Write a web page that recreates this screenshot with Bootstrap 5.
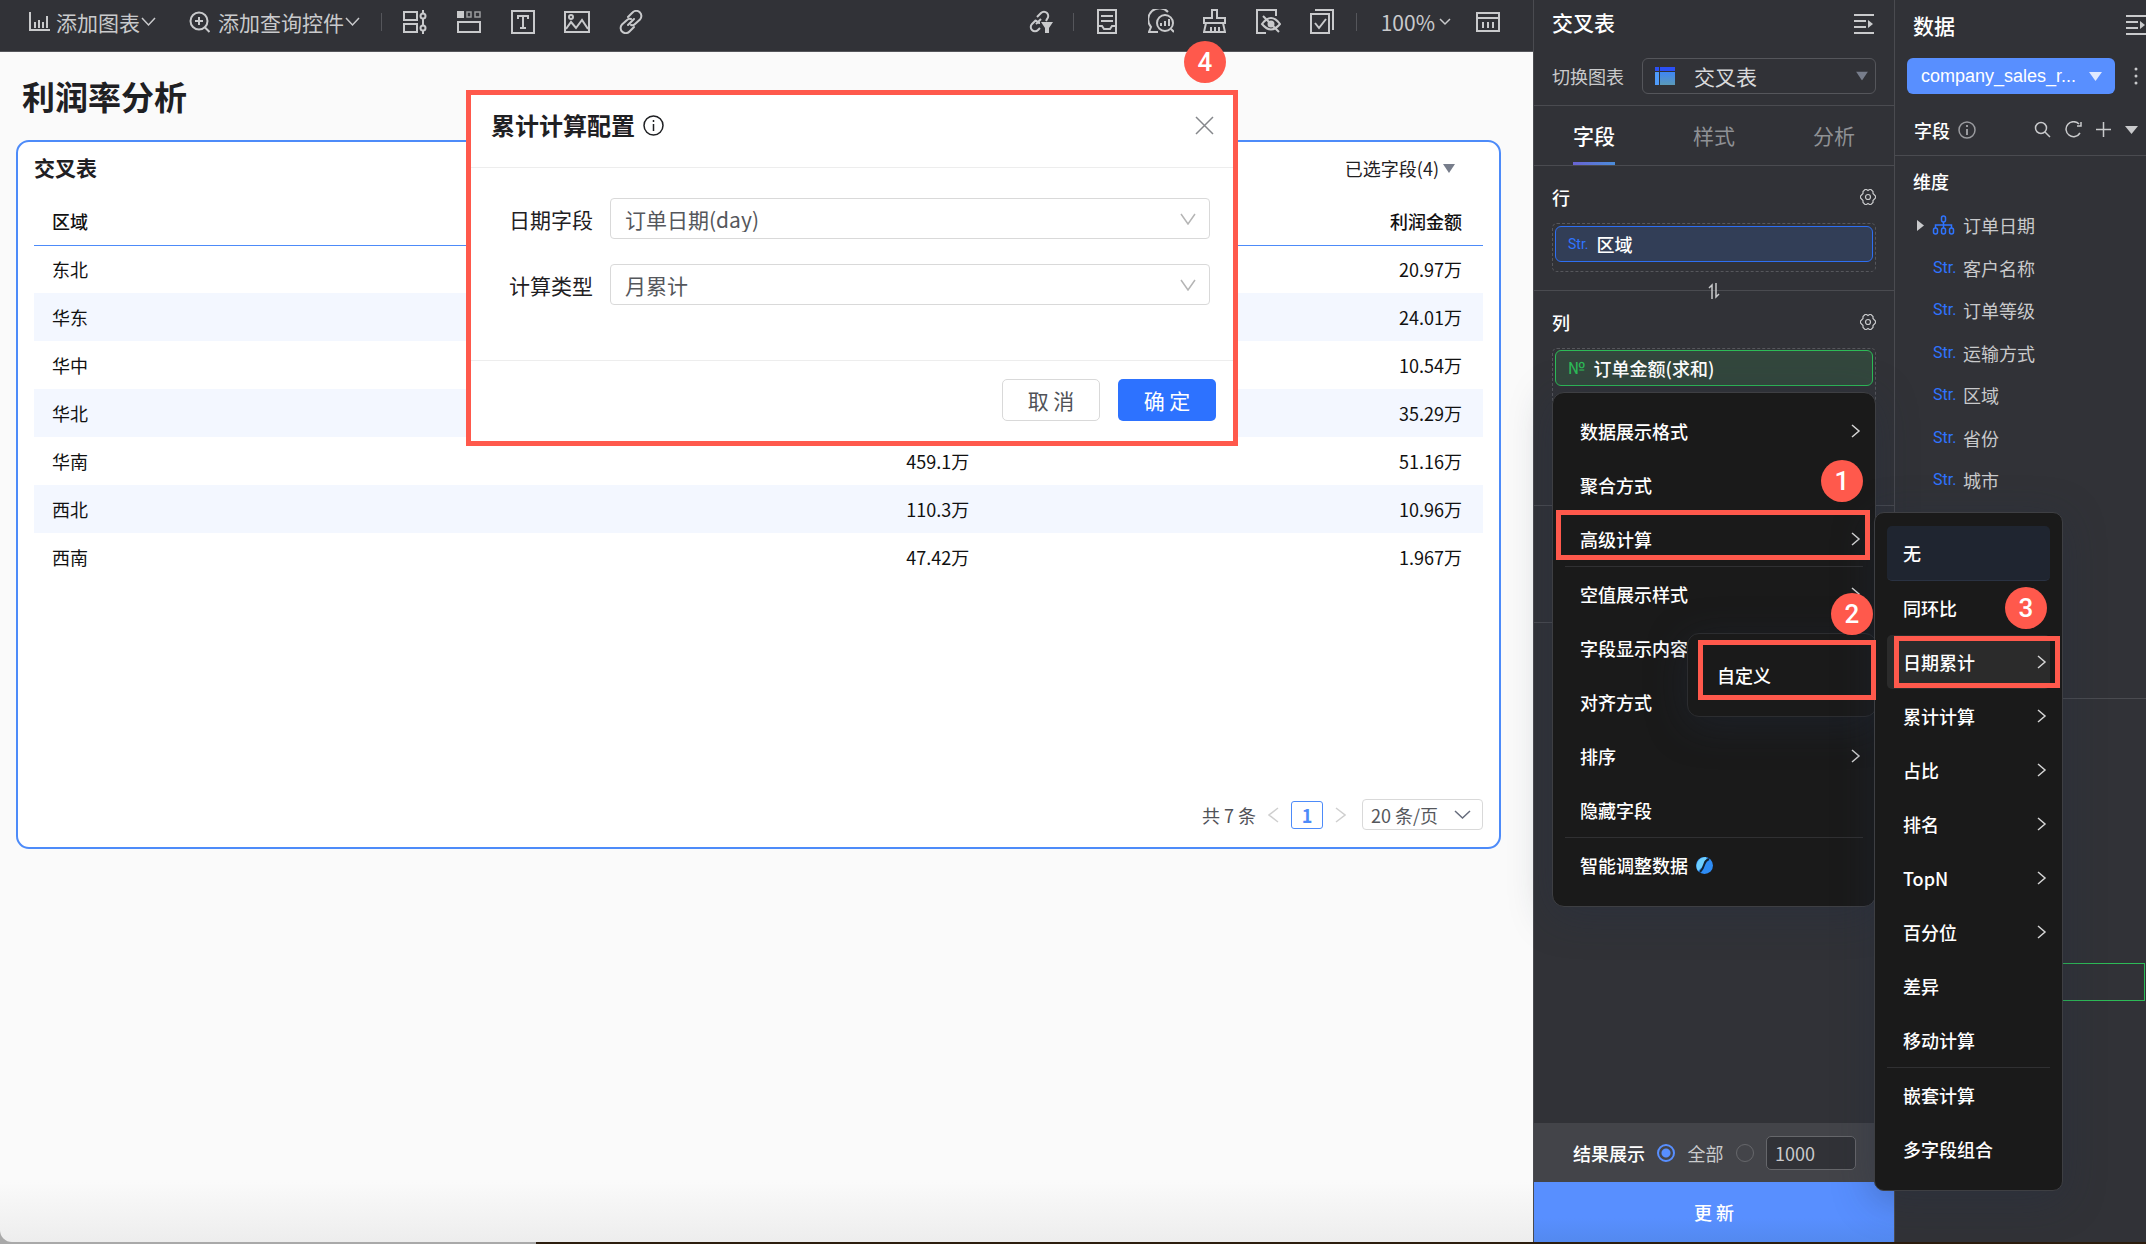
<!DOCTYPE html>
<html lang="zh-CN">
<head>
<meta charset="utf-8">
<meta name="viewport" content="width=device-width, initial-scale=1">
<title>利润率分析</title>
<link href="https://cdn.jsdelivr.net/npm/bootstrap@5.3.0/dist/css/bootstrap.min.css" rel="stylesheet">
<style>
:root{--panel:#313237;--line:#4a4b50;--soft:#c9cacc;--accent:#4d8bf9;--hot:#ff594c}
body{font-family:"Noto Sans CJK SC",sans-serif;font-size:18px;line-height:26px;color:#1f2023}
button{font-family:inherit}
svg{display:block;flex:none}
.ico{fill:none;stroke:currentColor;stroke-width:2}
.plain{background:none;border:0;padding:0;color:inherit;display:inline-flex;align-items:center;line-height:inherit;font-size:inherit}
.fs21{font-size:21px;line-height:30px}
.shell{height:100vh;padding-bottom:2px;background:linear-gradient(90deg,#a9a9a9 25%,#2c1d0e 25%)}
.workspace{background:linear-gradient(#fafafa calc(100% - 60px),#ededed);border-bottom-left-radius:12px;min-width:0}
.toolbar{height:52px;padding:0 32px 8px 28px;background:var(--panel);border-bottom:1px solid #55565b;color:var(--soft)}
.toolgroup{gap:28px}
.toolgroup .plain{width:26px;justify-content:center}
.vr-line{width:1px;height:18px;background:#55565b;margin:0 20px}
.page-title{font-size:33px;line-height:44px;font-weight:700;margin:22px 0 0 22px;padding-bottom:22px}
.chart{margin:0 32px 0 16px;min-height:709px;border:2px solid var(--accent);border-radius:13px;background:#fff;padding:0 16px 17px 16px}
.chart-head{height:52px;margin-bottom:6px}
.chart-head h2{font-size:21px;font-weight:700}
.grid-table{width:100%;table-layout:fixed;border-collapse:collapse;color:#111}
.grid-table th{height:45px;font-weight:500;padding-bottom:2px!important;border-bottom:1px solid var(--accent)}
.grid-table td{height:48px}
.grid-table th,.grid-table td{padding:0 21px 0 18px;text-align:right}
.grid-table th:first-child,.grid-table td:first-child{text-align:left}
.grid-table tbody tr:nth-child(even){background:#f3f7ff}
.pager{gap:12px;color:#505258}
.page-now{width:32px;height:28px;border:1px solid var(--accent);border-radius:3px;color:var(--accent);justify-content:center;font-weight:700}
.pick{position:relative}
.pick select{appearance:none;width:100%;height:100%;background:transparent;border:1px solid #d9d9d9;border-radius:4px;color:#55575c;padding:0 10px;font:inherit}
.pick svg{position:absolute;right:14px;top:50%;translate:0 -50%;pointer-events:none}
.pager .pick{width:121px;height:31px;margin-left:4px}
.pager .pick select{padding:0 8px}
.pager .pick svg{right:12px}
.dialog-box{position:absolute;left:466px;top:90px;width:772px;border:5px solid var(--hot);background:#fff;z-index:3}
.dialog-top{height:73px;padding:0 19px 12px 20px;border-bottom:1px solid #ededed}
.dialog-top h3{font-size:24px;font-weight:700;margin:0 8px 0 0}
.dialog-mid{padding:30px 23px 55px 38px;gap:25px}
.dialog-mid label{width:84px;margin-right:17px;font-size:21px}
.dialog-mid .pick{height:41px;font-size:21px}
.dialog-mid .pick select{padding:0 14px}
.dialog-end{padding:18px 17px 20px;gap:18px;border-top:1px solid #ededed}
.dlg-btn{width:98px;height:42px;padding:0;font-size:21px;line-height:30px;border-radius:5px}
.dlg-no{border:1px solid #d9d9d9;color:#505258;background:#fff}
.dlg-ok,.dlg-ok:hover{background:#2d72ff;color:#fff;border:0}
.pin{position:absolute;width:42px;height:42px;border-radius:50%;background:var(--hot);color:#fff;font:500 26px/42px Roboto,sans-serif;text-align:center;z-index:9}
.pin-4{left:1184px;top:41px}.pin-1{left:287px;top:460px}.pin-2{left:297px;top:593px}.pin-3{left:471px;top:587px}
.settings{width:361px;background:var(--panel);border-left:1px solid var(--line);color:#fff;flex:none}
.fields{width:252px;background:var(--panel);border-left:1px solid var(--line);color:#fff;flex:none}
.set-head{height:46px;padding:0 20px 2px 18px}
.set-type{height:60px;padding:0 18px 0;color:var(--soft);border-bottom:1px solid var(--line)}
.set-type .pick{width:234px;height:36px;font-size:21px}
.set-type .pick select{border-color:#55565b;border-radius:6px;color:#d8d9db;padding-left:51px}
.set-type .pick svg{right:8px;color:#777d8b}
.set-type .pick .type-mark{left:13px;right:auto}
.set-tabs{height:60px;padding:0 39px;border-bottom:1px solid var(--line);font-size:21px}
.set-tabs .plain{color:#8f9195;border-bottom:3px solid transparent;padding-top:2px}
.set-tabs .plain.active{color:#fff;font-weight:500;border-image:linear-gradient(90deg,#6a62d2,#4a8edb) 1}
.zone{padding:13px 18px 18px;border-bottom:1px solid var(--line)}
.zone h4{font-size:18px;line-height:36px;margin:0;font-weight:500}
.zone-rest{height:117px}
.drop{border:1px dashed #56575c;border-radius:5px;margin-top:8px;height:49px;padding:2px}
.drop-tall{height:139px;padding-top:1px}
.pill{height:36px;width:100%;border:1px solid #2e6ff2;border-radius:6px;background:#323e57;color:#fff;padding:0 12px;gap:8px;font-weight:500}
.pill-num{border-color:#2dbb57;background:#33473d}
.tag{font:16px/24px Roboto,sans-serif;color:#2f74ff}
.pill .tag{font-size:14px}
.pill .tag-num{font-size:17px;color:#2dbb57}
.swap{position:absolute;left:174px;top:283px}
.result{height:59px;background:#434449;padding:0 30px 0 39px;white-space:nowrap}
.result input[type=radio]{appearance:none;width:18px;height:18px;border:1px solid #66676b;border-radius:50%;margin:0;background:none;flex:none}
.result input[type=radio]:checked{border:2px solid #588fff;background:radial-gradient(#588fff 4px,transparent 5px)}
.result input[type=text]{width:90px;height:34px;border:1px solid #66676b;border-radius:5px;background:#313237;color:var(--soft);padding:0 8px}
.refresh{height:60px;background:linear-gradient(#588fff 60%,#5389ef);color:#fff;border:0}
.flyout{position:absolute;background:#1a1a1a;border:1px solid #3e3f43;border-radius:12px;color:#fff;z-index:4;box-shadow:0 8px 40px rgba(35,45,70,.35)}
.flyout .plain{width:100%;height:54px;justify-content:space-between;font-weight:500;text-align:left}
.flyout svg.ico{color:#d5d5d5;stroke-width:1.5}
.split{border-top:1px solid #303032}
.fly-main{left:18px;top:392px;width:324px;padding:11px 12px 14px}
.fly-main .plain{padding:0 2px 0 15px}
.fly-calc{left:340px;top:512px;width:189px;padding:13px 12px 14px;border-radius:10px;z-index:5}
.fly-calc .plain{padding:0 3px 0 16px}
.fly-calc .chosen{background:#1f2530;border-bottom:1px solid #2a3242;border-radius:5px;height:55px}
.fly-calc .hovered{background:#2b2b2b;border-radius:5px}
.fly-own{left:153px;top:633px;width:190px;padding:14px 12px;border-color:#2c2d30;z-index:4}
.fly-own .plain{padding:0 17px}
.ring{position:absolute;border:5px solid var(--hot);z-index:6;pointer-events:none}
.ring-a{left:22px;top:510px;width:314px;height:50px}
.ring-b{left:164px;top:640px;width:178px;height:60px}
.ring-c{left:360px;top:636px;width:166px;height:52px}
.data-head{height:58px;padding:0 0 8px 18px}
.dataset{width:208px;height:36px;background:#588fff;border-radius:6px;color:#fff;padding:0 12px 0 13px;font:18px/26px "Liberation Sans",sans-serif;justify-content:space-between}
.dataset:hover{background:#588fff;color:#fff}
.data-tools{height:62px;padding:10px 8px 0 19px;margin-bottom:12px;border-bottom:1px solid var(--line);color:var(--soft)}
.tool-set{gap:14px}
.data-list h4{font-size:18px;line-height:26px;font-weight:500;margin:0 0 10px 18px}
.data-list ul{height:297px}
.data-list li{height:42px;padding-left:38px;color:var(--soft)}
.data-list .tree-row{padding-left:22px}
.data-list .tag{width:30px}
.measure{position:absolute;left:20px;right:1px;top:963px;height:38px;border:1px solid #2dbb57}
.rule{position:absolute;left:0;right:0;top:698px;border-top:1px solid var(--line)}
</style>
<script src="https://cdn.jsdelivr.net/npm/bootstrap@5.3.0/dist/js/bootstrap.bundle.min.js"></script>
</head>
<body>
<div class="shell d-flex overflow-hidden position-relative">

<main class="workspace flex-fill position-relative">
  <header class="toolbar d-flex align-items-center justify-content-between">
    <div class="d-flex align-items-center">
      <button class="plain fs21"><svg class="ico me-1" width="24" height="20" viewBox="0 0 24 20"><path d="M2 0v18h20M7 16v-6M11 16V8M15 16v-6M19 16V4"/></svg>添加图表<svg class="ico" width="17" height="10" viewBox="0 0 17 10"><path d="M2 1l6.500 7 6.500-7" stroke-width="1.500"/></svg></button>
      <button class="plain fs21 ms-4 ps-2"><svg class="ico me-2" width="21" height="22" viewBox="0 0 21 22"><circle cx="10" cy="10" r="8.500"/><path d="M10 6v8M6 10h8M15.500 16l5 5"/></svg>添加查询控件<svg class="ico" width="17" height="10" viewBox="0 0 17 10"><path d="M2 1l6.500 7 6.500-7" stroke-width="1.500"/></svg></button>
      <span class="vr-line"></span>
      <div class="toolgroup d-flex">
        <button class="plain" aria-label="筛选器"><svg class="ico" width="24" height="24" viewBox="0 0 24 24"><path d="M1 2h13v8H1zM1 14h13v8H1zM20 0v4M20 8v8M20 20v4"/><circle cx="20" cy="6" r="2.500"/><circle cx="20" cy="18" r="2.500"/></svg></button>
        <button class="plain" aria-label="标签页"><svg class="ico" width="24" height="24" viewBox="0 0 24 24"><path d="M0 1h7v7H0z" fill="currentColor" stroke="none"/><path d="M10 2h4v5h-4zM18 2h5v5h-5z" stroke-width="1.500" opacity=".7"/><path d="M1 12h22v10H1z"/></svg></button>
        <button class="plain" aria-label="文本"><svg class="ico" width="24" height="24" viewBox="0 0 24 24"><path d="M1 1h22v22H1zM7 9V6h10v3M12 6v12M9 18h6"/></svg></button>
        <button class="plain" aria-label="图片"><svg class="ico" width="26" height="22" viewBox="0 0 26 22"><path d="M1 1h24v20H1z"/><circle cx="7" cy="6" r="2"/><path d="M2 18l5-7 5 6 6-8 6 9"/></svg></button>
        <button class="plain" aria-label="链接"><svg class="ico" width="24" height="24" viewBox="0 0 24 24"><path d="M9 7l4.500-4.500a5 5 0 017.500 7L16 14a4 4 0 01-4 1M15 17l-4.500 4.500a5 5 0 01-7.500-7L8 10a4 4 0 014-1M9 15l6-6" stroke-linecap="round"/></svg></button>
      </div>
    </div>
    <div class="d-flex align-items-center">
      <button class="plain" aria-label="联动"><svg class="ico" width="24" height="24" viewBox="0 0 24 24"><path d="M8 7l4-4a4 4 0 016 6l-1 2M11 13a4 4 0 01-4-3M11 18l-2 2a4 4 0 01-6-6l4-4M7 14l5-5"/><path d="M12 12h12l-4 6v5h-4v-5z" fill="currentColor" stroke="none"/></svg></button>
      <span class="vr-line"></span>
      <div class="toolgroup d-flex">
        <button class="plain" aria-label="收件"><svg class="ico" width="20" height="25" viewBox="0 0 20 25"><path d="M1 1h18v23H1zM4 7h12M4 12h12M1 17h4l2 3h6l2-3h4"/></svg></button>
        <button class="plain" aria-label="智能分析"><svg class="ico" width="26" height="25" viewBox="0 0 26 25"><path d="M20 3A11 11 0 003 18l-2 5h9"/><circle cx="17" cy="14" r="8"/><path d="M13 17v-3M17 17v-5M21 17v-7M23 20l3 3"/></svg></button>
        <button class="plain" aria-label="清理"><svg class="ico" width="23" height="25" viewBox="0 0 23 25"><path d="M9 9V1h5v8h8v5H1V9zM3 14L1 23h21l-2-9M8 23v-5M12 23v-5M16 23v-5"/></svg></button>
        <button class="plain" aria-label="隐藏"><svg class="ico" width="25" height="25" viewBox="0 0 25 25"><path d="M10 24H1V1h19v6M6 15q9-12 18 0-9 11-18 0zM7 7l16 16"/><circle cx="15" cy="15" r="2.500" fill="currentColor"/></svg></button>
        <button class="plain" aria-label="多选"><svg class="ico" width="25" height="25" viewBox="0 0 25 25"><path d="M1 5h18v19H1zM5 1h18v20M5 14l4 5 7-9"/></svg></button>
      </div>
      <span class="vr-line me-4"></span>
      <button class="plain fs21 me-4">100%<svg class="ico ms-1" width="12" height="8" viewBox="0 0 12 8"><path d="M1 1l5 5 5-5" stroke-width="1.500"/></svg></button>
      <button class="plain" aria-label="表格"><svg class="ico" width="26" height="22" viewBox="0 0 26 22"><path d="M2 2h22v18H2zM2 7h22M8 11v6M13 11v6M18 11v6"/></svg></button>
    </div>
  </header>

  <h1 class="page-title mb-0">利润率分析</h1>

  <section class="chart d-flex flex-column">
    <div class="chart-head d-flex align-items-center justify-content-between">
      <h2 class="m-0">交叉表</h2>
      <button class="plain me-4">已选字段(4)<svg class="ms-1 me-1" width="12" height="9" viewBox="0 0 12 9"><path d="M0 0h12L6 9z" fill="#777d8b"/></svg></button>
    </div>
    <table class="grid-table">
      <colgroup><col style="width:33%"><col style="width:33%"><col style="width:34%"></colgroup>
      <thead><tr><th>区域</th><th></th><th>利润金额</th></tr></thead>
      <tbody>
        <tr><td>东北</td><td></td><td>20.97万</td></tr>
        <tr><td>华东</td><td></td><td>24.01万</td></tr>
        <tr><td>华中</td><td></td><td>10.54万</td></tr>
        <tr><td>华北</td><td></td><td>35.29万</td></tr>
        <tr><td>华南</td><td>459.1万</td><td>51.16万</td></tr>
        <tr><td>西北</td><td>110.3万</td><td>10.96万</td></tr>
        <tr><td>西南</td><td>47.42万</td><td>1.967万</td></tr>
      </tbody>
    </table>
    <div class="pager d-flex align-items-center justify-content-end mt-auto">
      <span>共 7 条</span>
      <button class="plain" aria-label="上一页"><svg class="ico" width="11" height="16" viewBox="0 0 11 16"><path d="M10 1L1 8l9 7" stroke="#cfcfcf" stroke-width="1.500"/></svg></button>
      <button class="plain page-now">1</button>
      <button class="plain" aria-label="下一页"><svg class="ico" width="11" height="16" viewBox="0 0 11 16"><path d="M1 1l9 7-9 7" stroke="#cfcfcf" stroke-width="1.500"/></svg></button>
      <div class="pick"><select aria-label="每页条数"><option>20 条/页</option></select><svg class="ico" width="17" height="10" viewBox="0 0 17 10"><path d="M1 1l7.500 7L16 1" stroke="#666c7c" stroke-width="1.500"/></svg></div>
    </div>
  </section>

  <section class="dialog-box" role="dialog" aria-label="累计计算配置">
    <div class="dialog-top d-flex align-items-center">
      <h3>累计计算配置</h3>
      <svg class="ico" width="21" height="21" viewBox="0 0 21 21"><circle cx="10.500" cy="10.500" r="9.500" stroke-width="1.500"/><path d="M10.500 9v7M10.500 5v2" stroke-width="1.500"/></svg>
      <button class="plain ms-auto" aria-label="关闭"><svg class="ico" width="19" height="19" viewBox="0 0 19 19"><path d="M1 1l17 17M18 1L1 18" stroke="#85878b" stroke-width="1.500"/></svg></button>
    </div>
    <div class="dialog-mid d-flex flex-column">
      <div class="d-flex align-items-center"><label for="dateField">日期字段</label><div class="pick flex-fill"><select id="dateField"><option>订单日期(day)</option></select><svg class="ico" width="16" height="12" viewBox="0 0 16 12"><path d="M1 1l7 10 7-10" stroke="#b5b5b5" stroke-width="1.500"/></svg></div></div>
      <div class="d-flex align-items-center"><label for="calcType">计算类型</label><div class="pick flex-fill"><select id="calcType"><option>月累计</option></select><svg class="ico" width="16" height="12" viewBox="0 0 16 12"><path d="M1 1l7 10 7-10" stroke="#b5b5b5" stroke-width="1.500"/></svg></div></div>
    </div>
    <div class="dialog-end d-flex justify-content-end">
      <button class="btn dlg-btn dlg-no">取 消</button>
      <button class="btn dlg-btn dlg-ok">确 定</button>
    </div>
  </section>
  <span class="pin pin-4">4</span>
</main>

<aside class="settings d-flex flex-column position-relative">
  <div class="set-head d-flex align-items-center justify-content-between">
    <span class="fs21 fw-medium">交叉表</span>
    <svg class="ico mt-1" width="20" height="20" viewBox="0 0 20 20" color="#c9cacc"><path d="M0 1h20M0 7h12M0 13h12M0 19h20"/><path d="M14 6l5 4-5 4z" fill="currentColor" stroke="none"/></svg>
  </div>
  <div class="set-type d-flex align-items-center justify-content-between">
    <label for="chartType">切换图表</label>
    <div class="pick"><select id="chartType"><option>交叉表</option></select>
      <svg class="type-mark" width="20" height="18" viewBox="0 0 20 18"><defs><linearGradient id="tm" x2="0" y2="1"><stop stop-color="#3f86f5"/><stop offset="1" stop-color="#5b9ab8"/></linearGradient></defs><path d="M0 0h4v4H0zM5 0h15v4H5z" fill="#2b50f6"/><path d="M0 5h4v13H0z" fill="#4f9bfa"/><path d="M5 5h15v13H5z" fill="url(#tm)"/></svg>
      <svg width="12" height="9" viewBox="0 0 12 9"><path d="M0 0h12L6 9z" fill="currentColor"/></svg></div>
  </div>
  <nav class="set-tabs d-flex justify-content-between">
    <button class="plain active">字段</button><button class="plain">样式</button><button class="plain">分析</button>
  </nav>
  <section class="zone">
    <div class="d-flex align-items-center justify-content-between"><h4>行</h4><svg class="ico" width="16" height="18" viewBox="0 0 16 18" color="#c9cacc"><path d="M5 1.500h1.500l1.500 1 1.500-1H11l2 2v2l2.500 2.500v2L13 12.500v2l-2 2H9.500l-1.500-1-1.500 1H5l-2-2v-2L.5 10V8L3 5.500v-2z" stroke-width="1.200"/><circle cx="8" cy="9" r="2.500" stroke-width="1.200"/></svg></div>
    <div class="drop"><button class="plain pill"><span class="tag">Str.</span>区域</button></div>
  </section>
  <svg class="ico swap" width="12" height="16" viewBox="0 0 12 16" color="#c9cacc"><path d="M4 16V2L1 5M8 0v14l3-3" stroke-width="1.500"/></svg>
  <section class="zone">
    <div class="d-flex align-items-center justify-content-between"><h4>列</h4><svg class="ico" width="16" height="18" viewBox="0 0 16 18" color="#c9cacc"><path d="M5 1.500h1.500l1.500 1 1.500-1H11l2 2v2l2.500 2.500v2L13 12.500v2l-2 2H9.500l-1.500-1-1.500 1H5l-2-2v-2L.5 10V8L3 5.500v-2z" stroke-width="1.200"/><circle cx="8" cy="9" r="2.500" stroke-width="1.200"/></svg></div>
    <div class="drop drop-tall"><button class="plain pill pill-num"><span class="tag tag-num">№</span>订单金额(求和)</button></div>
  </section>
  <section class="zone zone-rest"></section>
  <div class="flex-fill"></div>
  <div class="result d-flex align-items-center justify-content-between">
    <span class="fw-medium">结果展示</span>
    <input type="radio" name="rows" id="allRows" checked><label for="allRows" style="color:#c9cacc">全部</label>
    <input type="radio" name="rows" id="someRows" aria-label="指定条数">
    <input class="me-2" type="text" value="1000" aria-label="条数">
  </div>
  <button class="refresh fw-medium">更 新</button>

  <div class="flyout fly-main">
    <button class="plain">数据展示格式<svg class="ico" width="10" height="14" viewBox="0 0 10 14"><path d="M1 1l7 6-7 6"/></svg></button>
    <button class="plain">聚合方式</button>
    <button class="plain">高级计算<svg class="ico" width="10" height="14" viewBox="0 0 10 14"><path d="M1 1l7 6-7 6"/></svg></button>
    <div class="split"></div>
    <button class="plain">空值展示样式<svg class="ico" width="10" height="14" viewBox="0 0 10 14"><path d="M1 1l7 6-7 6"/></svg></button>
    <button class="plain">字段显示内容</button>
    <button class="plain">对齐方式</button>
    <button class="plain">排序<svg class="ico" width="10" height="14" viewBox="0 0 10 14"><path d="M1 1l7 6-7 6"/></svg></button>
    <button class="plain">隐藏字段</button>
    <div class="split"></div>
    <button class="plain justify-content-start">智能调整数据<svg class="ms-2" width="17" height="17" viewBox="0 0 17 17"><circle cx="8.500" cy="8.500" r="8.500" fill="#2e8cf5"/><path d="M2 14C-2 7 3 0 10 0l1 3c-5 2-1 5-6 8z" fill="#6fd0ff"/><path d="M13 2C6 5 11 7 4 15" fill="none" stroke="#123" stroke-width="2"/></svg></button>
  </div>
  <div class="flyout fly-own"><button class="plain">自定义</button></div>
  <div class="flyout fly-calc">
    <button class="plain chosen">无</button>
    <button class="plain">同环比</button>
    <button class="plain hovered">日期累计<svg class="ico" width="10" height="14" viewBox="0 0 10 14"><path d="M1 1l7 6-7 6"/></svg></button>
    <button class="plain">累计计算<svg class="ico" width="10" height="14" viewBox="0 0 10 14"><path d="M1 1l7 6-7 6"/></svg></button>
    <button class="plain">占比<svg class="ico" width="10" height="14" viewBox="0 0 10 14"><path d="M1 1l7 6-7 6"/></svg></button>
    <button class="plain">排名<svg class="ico" width="10" height="14" viewBox="0 0 10 14"><path d="M1 1l7 6-7 6"/></svg></button>
    <button class="plain">TopN<svg class="ico" width="10" height="14" viewBox="0 0 10 14"><path d="M1 1l7 6-7 6"/></svg></button>
    <button class="plain">百分位<svg class="ico" width="10" height="14" viewBox="0 0 10 14"><path d="M1 1l7 6-7 6"/></svg></button>
    <button class="plain">差异</button>
    <button class="plain">移动计算</button>
    <div class="split"></div>
    <button class="plain">嵌套计算</button>
    <button class="plain">多字段组合</button>
  </div>
  <span class="ring ring-a"></span><span class="ring ring-b"></span><span class="ring ring-c"></span>
  <span class="pin pin-1">1</span><span class="pin pin-2">2</span><span class="pin pin-3">3</span>
</aside>

<aside class="fields position-relative z-0">
  <div class="data-head d-flex align-items-center justify-content-between">
    <span class="fs21 fw-medium">数据</span>
    <svg class="ico" width="20" height="20" viewBox="0 0 20 20" color="#c9cacc"><path d="M0 1h20M0 7h12M0 13h12M0 19h20"/><path d="M14 6l5 4-5 4z" fill="currentColor" stroke="none"/></svg>
  </div>
  <div class="d-flex align-items-center justify-content-between px-2 ms-1">
    <button class="btn dataset d-flex align-items-center">company_sales_r...<svg width="13" height="9" viewBox="0 0 13 9"><path d="M0 0h13L6.500 9z" fill="#dfe9ff"/></svg></button>
    <svg width="4" height="18" viewBox="0 0 4 18" fill="#c9cacc"><circle cx="2" cy="2" r="1.500"/><circle cx="2" cy="9" r="1.500"/><circle cx="2" cy="16" r="1.500"/></svg>
  </div>
  <div class="data-tools d-flex align-items-center justify-content-between">
    <div class="d-flex align-items-center"><span class="text-white fw-medium me-2">字段</span>
    <svg class="ico" width="18" height="18" viewBox="0 0 18 18" color="#9a9b9f"><circle cx="9" cy="9" r="8" stroke-width="1.500"/><path d="M9 8v6M9 4v2"/></svg></div>
    <div class="tool-set d-flex align-items-center">
    <svg class="ico" width="17" height="17" viewBox="0 0 17 17"><circle cx="7" cy="7" r="5.500" stroke-width="1.500"/><path d="M11 11l5 5" stroke-width="1.500"/></svg>
    <svg class="ico" width="17" height="17" viewBox="0 0 17 17"><path d="M14 3a7.500 7.500 0 101 9M16 1v4h-4" stroke-width="1.500"/></svg>
    <svg class="ico" width="15" height="15" viewBox="0 0 15 15"><path d="M7.500 0v15M0 7.500h15" stroke-width="1.500"/></svg>
    <svg width="13" height="8" viewBox="0 0 13 8"><path d="M0 0h13L6.500 8z" fill="currentColor"/></svg>
    </div>
  </div>
  <div class="data-list">
    <h4>维度</h4>
    <ul class="list-unstyled m-0 d-flex flex-column justify-content-between">
      <li class="tree-row d-flex align-items-center"><svg class="me-2" width="7" height="11" viewBox="0 0 7 11"><path d="M0 0l7 5.500L0 11z" fill="currentColor"/></svg><svg class="ico me-2" width="23" height="20" viewBox="0 0 22 20" color="#2f74ff"><rect x="9" y="1" width="4" height="6" rx="2" stroke-width="1.500"/><path d="M11 7v6M3 13v-3h16v3" stroke-width="1.500"/><rect x="1" y="13" width="4" height="6" rx="2" stroke-width="1.500"/><rect x="9" y="13" width="4" height="6" rx="2" stroke-width="1.500"/><rect x="17" y="13" width="4" height="6" rx="2" stroke-width="1.500"/></svg>订单日期</li>
      <li class="d-flex align-items-center"><span class="tag">Str.</span>客户名称</li>
      <li class="d-flex align-items-center"><span class="tag">Str.</span>订单等级</li>
      <li class="d-flex align-items-center"><span class="tag">Str.</span>运输方式</li>
      <li class="d-flex align-items-center"><span class="tag">Str.</span>区域</li>
      <li class="d-flex align-items-center"><span class="tag">Str.</span>省份</li>
      <li class="d-flex align-items-center"><span class="tag">Str.</span>城市</li>
    </ul>
  </div>
  <div class="rule"></div><div class="measure"></div>
</aside>
</div>
</body>
</html>
